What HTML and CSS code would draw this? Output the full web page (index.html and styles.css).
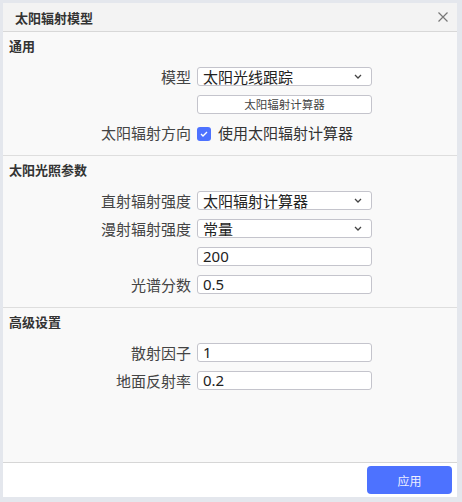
FILE: index.html
```html
<!DOCTYPE html>
<html lang="zh">
<head>
<meta charset="utf-8">
<link rel="stylesheet" href="styles.css">
</head>
<body>
<div class="dialog">
  <div class="header">
    <span class="title">太阳辐射模型</span>
    <svg class="close" width="10" height="10" viewBox="0 0 10 10"><path d="M0.5 0.5L9.5 9.5M9.5 0.5L0.5 9.5" stroke="#777" stroke-width="1.2" fill="none"/></svg>
  </div>
  <div class="body">
    <div class="section">
      <div class="sec-title">通用</div>
      <div class="form">
        <div class="label">模型</div>
        <div class="field select"><span>太阳光线跟踪</span><svg class="chev" width="8" height="5" viewBox="0 0 8 5"><path d="M1 1L4 4L7 1" stroke="#444" stroke-width="1.3" fill="none"/></svg></div>
        <div class="label"></div>
        <div class="field button">太阳辐射计算器</div>
        <div class="label">太阳辐射方向</div>
        <div class="check-row"><span class="check"><svg width="8" height="6" viewBox="0 0 8 6"><path d="M1 3L3 5L7 1" stroke="#fff" stroke-width="1.3" fill="none"/></svg></span><span>使用太阳辐射计算器</span></div>
      </div>
    </div>
    <div class="section">
      <div class="sec-title">太阳光照参数</div>
      <div class="form">
        <div class="label">直射辐射强度</div>
        <div class="field select"><span>太阳辐射计算器</span><svg class="chev" width="8" height="5" viewBox="0 0 8 5"><path d="M1 1L4 4L7 1" stroke="#444" stroke-width="1.3" fill="none"/></svg></div>
        <div class="label">漫射辐射强度</div>
        <div class="field select"><span>常量</span><svg class="chev" width="8" height="5" viewBox="0 0 8 5"><path d="M1 1L4 4L7 1" stroke="#444" stroke-width="1.3" fill="none"/></svg></div>
        <div class="label"></div>
        <div class="field input">200</div>
        <div class="label">光谱分数</div>
        <div class="field input">0.5</div>
      </div>
    </div>
    <div class="section last">
      <div class="sec-title">高级设置</div>
      <div class="form">
        <div class="label">散射因子</div>
        <div class="field input">1</div>
        <div class="label">地面反射率</div>
        <div class="field input">0.2</div>
      </div>
    </div>
  </div>
  <div class="footer">
    <button class="apply">应用</button>
  </div>
</div>
</body>
</html>
```
FILE: styles.css
```css
* { box-sizing: border-box; }
html, body { margin: 0; padding: 0; }
body {
  width: 462px;
  height: 502px;
  background: #e4e7ed;
  padding: 3px 5px 5px 3px;
  font-family: "Noto Sans", "Noto Sans CJK SC", sans-serif;
  color: #333;
}
.dialog {
  width: 454px;
  height: 494px;
  display: flex;
  flex-direction: column;
  background: #f9f9f9;
}
.header {
  height: 29px;
  flex: none;
  display: flex;
  align-items: center;
  justify-content: space-between;
  padding: 0 9px 0 12px;
  background: #f3f3f3;
  border-bottom: 1px solid #d8d8d8;
}
.title {
  font-family: "Noto Sans CJK SC", sans-serif;
  font-weight: bold;
  font-size: 13px;
  color: #333;
}
.body {
  flex: 1;
  background: #f9f9f9;
}
.section {
  padding: 6px 0 13px 0;
  border-bottom: 1px solid #dedede;
}
.section.last { border-bottom: none; }
.sec-title {
  font-family: "Noto Sans CJK SC", sans-serif;
  font-weight: bold;
  font-size: 13px;
  line-height: 16px;
  padding-left: 6px;
  margin-bottom: 13px;
  color: #333;
}
.form {
  display: grid;
  grid-template-columns: 188px 175px;
  column-gap: 6px;
  row-gap: 9px;
}
.label {
  font-family: "Noto Sans CJK SC", sans-serif;
  font-size: 15px;
  line-height: 19px;
  height: 19px;
  text-align: right;
  color: #444;
}
.field {
  height: 19px;
  border: 1px solid #c4c4cc;
  border-radius: 3px;
  background: #fff;
  font-size: 15px;
  line-height: 17px;
  padding-left: 5px;
  color: #222;
}
.select {
  display: flex;
  align-items: center;
  justify-content: space-between;
  padding-right: 9px;
  font-family: "Noto Sans CJK SC", sans-serif;
}
.select span { line-height: 17px; }
.chev { display: block; }
.button {
  font-family: "Noto Sans CJK SC", sans-serif;
  font-size: 11.5px;
  text-align: center;
  padding-left: 0;
  color: #444;
}
.input {
  font-family: "Noto Sans", sans-serif;
  font-size: 15px;
}
.check-row {
  display: flex;
  align-items: center;
  gap: 7px;
  height: 19px;
  font-family: "Noto Sans CJK SC", sans-serif;
  font-size: 15px;
  color: #333;
}
.check {
  width: 14px;
  height: 14px;
  border-radius: 3px;
  background: #4d72ff;
  display: flex;
  align-items: center;
  justify-content: center;
  margin-top: 2px;
}
.check svg { display: block; }
.footer {
  height: 35px;
  flex: none;
  background: #fff;
  border-top: 1px solid #d6d6d6;
  display: flex;
  justify-content: flex-end;
  align-items: flex-start;
  padding: 3px 5px 0 0;
}
.apply {
  width: 85px;
  height: 28px;
  border: none;
  border-radius: 4px;
  background: #4d72ff;
  color: #eef;
  font-family: "Noto Sans CJK SC", sans-serif;
  font-size: 12px;
}
```
